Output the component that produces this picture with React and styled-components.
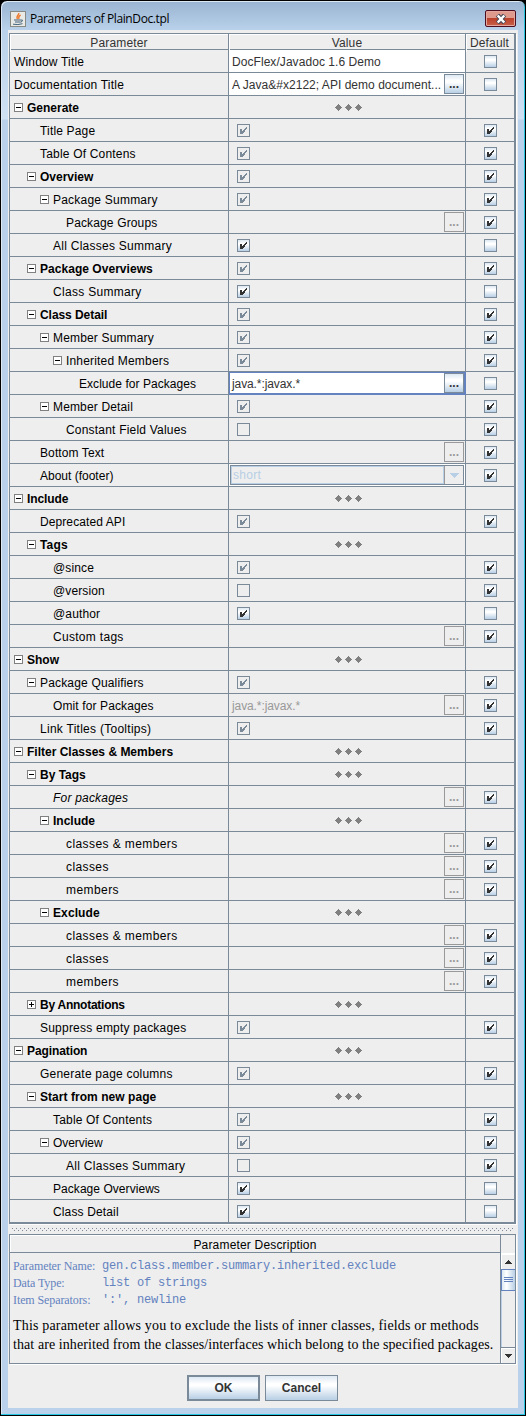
import React from 'react';
import styled, { createGlobalStyle, css } from 'styled-components';

const line = '#7a8a99';
const gloss = 'linear-gradient(#dde8f3 0%, #ffffff 32%, #ffffff 40%, #b8cfe5 100%)';

const Global = createGlobalStyle`
  * { box-sizing: border-box; }
  body { margin: 0; background: #000; font-family: "Liberation Sans", Arial, sans-serif; font-size: 12px; color: #000; }
`;

const Frame = styled.div`
  width: 526px;
  height: 1416px;
  padding: 0 7px 7px 7px;
  border: 1px solid #000;
  border-radius: 7px 7px 0 0;
  background: linear-gradient(#99b4d1 0px, #b9d1ea 29px, #cfe0f2 118px, #b9d1ea 119px, #b9d1ea 100%);
  box-shadow: inset -1px -1px 0 #27c6e0, inset 1px 1px 0 #dfe9f3;
  display: flex;
  flex-direction: column;
`;
const TitleBar = styled.div`
  flex: none;
  height: 29px;
  display: flex;
  align-items: flex-start;
  padding: 9px 2px 0 2px;
`;
const AppIcon = styled.svg`
  width: 16px;
  height: 16px;
  margin-top: 1px;
`;
const Title = styled.div`
  flex: 1;
  padding-left: 4px;
  font: 12px/17px "Open Sans", "Noto Sans", sans-serif;
  letter-spacing: -0.39px;
`;
const Close = styled.div`
  width: 31px;
  height: 17px;
  border: 1px solid #4c0d1e;
  border-radius: 2px;
  box-shadow: inset 0 0 0 1px #e3a79f;
  background: linear-gradient(#dd9a8d 0 45%, #bb412b 50%, #c9604b 100%);
  display: flex;
  align-items: center;
  justify-content: center;
`;
const Body = styled.div`
  flex: 1;
  background: #eee;
  padding: 3px 2px 0 1px;
  display: flex;
  flex-direction: column;
`;
const Table = styled.div`
  width: 507px;
  border: 1px solid ${line};
  border-right-width: 2px;
  border-bottom-width: 2px;
  box-shadow: 1px 1px 0 #fff;
`;
const Grid = styled.div`
  display: grid;
  grid-template-columns: 219px 237px 48px;
  border-bottom: 1px solid ${line};
`;
const HeadRow = styled(Grid)`
  height: 16px;
`;
const HeadCell = styled.div`
  border-right: 1px solid ${p => (p.$last ? 'transparent' : line)};
  box-shadow: inset 1px 1px 0 #fff;
  text-align: center;
  line-height: 18px;
  letter-spacing: 0.15px;
  color: #333;
`;
const Row = styled(Grid)`
  height: 23px;
  &:last-child { height: 22px; border-bottom: 0; }
`;
const NameCell = styled.div`
  border-right: 1px solid ${line};
  display: flex;
  align-items: flex-start;
  padding: 5px 0 0 ${p => p.$indent}px;
  line-height: 14px;
  font-weight: ${p => (p.$bold ? 700 : 400)};
  font-style: ${p => (p.$italic ? 'italic' : 'normal')};
  white-space: nowrap;
`;
const Label = styled.span`
  letter-spacing: ${p => p.$ls}px;
`;
const Toggle = styled.svg`
  width: 9px;
  height: 9px;
  margin: 2px 4px 0 0;
  flex: none;
`;
const ValueCell = styled.div`
  border-right: 1px solid ${line};
  display: flex;
  align-items: flex-start;
  min-width: 0;
  padding: ${p => (p.$check ? '5px 1px 0 8px' : '1px 1px 0 3px')};
  color: ${p => (p.$off ? '#999' : '#333')};
  ${p => p.$white && css`background: #fff;`}
  ${p => p.$active && css`box-shadow: inset 0 0 0 1px #6382bf, 0 1px 0 #6382bf; border-color: #6382bf;`}
`;
const DotsCell = styled(ValueCell)`
  justify-content: center;
  padding: 8px 0 0 3px;
`;
const Text = styled.span`
  flex: 1;
  padding-top: 4px;
  line-height: 14px;
  letter-spacing: ${p => p.$ls}px;
  white-space: nowrap;
`;
const DefaultCell = styled.div`
  display: flex;
  align-items: flex-start;
  justify-content: center;
  padding: 5px 0 0 1px;
`;
const Box = styled.div`
  width: 13px;
  height: 13px;
  border: 1px solid ${line};
  background: ${p => (p.$off ? 'transparent' : gloss)};
  flex: none;
  display: flex;
`;
const More = styled.div`
  width: 20px;
  height: 20px;
  flex: none;
  border: 1px solid ${p => (p.$off ? '#999' : line)};
  background: ${p => (p.$off ? '#eee' : gloss)};
  color: ${p => (p.$off ? '#999' : '#333')};
  font-weight: 700;
  line-height: 19px;
  text-align: center;
`;
const Combo = styled.div`
  width: 234px;
  height: 20px;
  margin-left: -2px;
  border: 1px solid ${line};
  display: flex;
  outline: 1px solid #fff;
`;
const ComboText = styled.div`
  flex: 1;
  border: 1px solid #b8cfe5;
  color: #b8cfe5;
  padding-left: 1px;
  line-height: 16px;
  letter-spacing: 0.3px;
`;
const ComboArrow = styled.div`
  width: 19px;
  border-left: 1px solid #999;
  display: flex;
  align-items: center;
  justify-content: center;
`;
const Splitter = styled.svg`
  display: block;
  width: 507px;
  height: 10px;
  flex: none;
`;
const Description = styled.div`
  width: 507px;
  height: 130px;
  border: 1px solid ${line};
  box-shadow: 1px 1px 0 #fff;
  display: flex;
`;
const DescMain = styled.div`
  flex: 1;
  min-width: 0;
  border-right: 1px solid ${line};
`;
const DescHead = styled.div`
  height: 18px;
  border-bottom: 1px solid ${line};
  box-shadow: inset 1px 1px 0 #fff;
  line-height: 20px;
  text-align: center;
  letter-spacing: 0.18px;
`;
const Meta = styled.div`
  display: grid;
  grid-template-columns: 89px 1fr;
  grid-auto-rows: 17px;
  align-items: center;
  padding: 5px 0 0 3px;
  color: #6382bf;
  font: 12px "Liberation Serif", serif;
  letter-spacing: -0.1px;
`;
const Code = styled.span`
  font: 12px "Liberation Mono", monospace;
  letter-spacing: -0.2px;
  padding-bottom: 2px;
`;
const Para = styled.div`
  padding: 7px 0 0 3px;
  font: 14px/19px "Liberation Serif", serif;
  white-space: nowrap;
`;
const ParaLine = styled.div`
  letter-spacing: ${p => p.$ls}px;
`;
const Scroll = styled.div`
  width: 14px;
  padding-top: 18px;
  display: flex;
  flex-direction: column;
`;
const ScrollButton = styled.div`
  height: 16px;
  display: flex;
  align-items: center;
  justify-content: center;
  border-top: 1px solid ${p => (p.$end ? line : '#fff')};
  box-shadow: inset 1px 1px 0 #fff;
`;
const Thumb = styled.div`
  height: 22px;
  border: 1px solid #6382bf;
  border-right: 0;
  background: linear-gradient(90deg, #dde8f3, #fff 35%, #b8cfe5);
  display: flex;
  align-items: center;
  justify-content: center;
`;
const Track = styled.div`
  flex: 1;
  border-left: 1px solid #b8cfe5;
`;
const Buttons = styled.div`
  display: flex;
  gap: 5px;
  padding: 11px 0 0 178px;
`;
const Button = styled.div`
  width: 73px;
  height: 26px;
  border: ${p => (p.$primary ? 2 : 1)}px solid ${line};
  background: ${gloss};
  color: #333;
  font-weight: 700;
  display: flex;
  align-items: center;
  justify-content: center;
`;

const Tick = ({ off }) => (
  <svg width="11" height="11" viewBox="0 0 11 11" shapeRendering="crispEdges" fill={off ? line : '#333'}>
    <rect x="2" y="4" width="2" height="5" />
    {[3, 3, 3, 2, 2].map((h, i) => <rect key={i} x={4 + i} y={6 - i} width="1" height={h} />)}
  </svg>
);
const Check = ({ on, off }) => <Box $off={off}>{on && <Tick off={off} />}</Box>;
const Dots = () => (
  <svg width="27" height="7" shapeRendering="crispEdges" fill="#808080">
    {[0, 10, 20].map(x => (
      <path key={x} d={`M${x + 3} 0h1v1h1v1h1v1h1v1h-1v1h-1v1h-1v1h-1v-1h-1v-1h-1v-1h-1v-1h1v-1h1v-1h1z`} />
    ))}
  </svg>
);
const Expander = ({ closed }) => (
  <Toggle viewBox="0 0 9 9" shapeRendering="crispEdges">
    <rect x="0.5" y="0.5" width="8" height="8" fill="#fff" stroke="#808080" />
    <path d="M2 4h5v1h-5z" />
    {closed && <path d="M4 2h1v5h-1z" />}
  </Toggle>
);
const Triangle = ({ up, color = '#333', w = 8 }) => (
  <svg width={w} height={w / 2} viewBox="0 0 8 4" shapeRendering="crispEdges">
    <path d={up ? 'M0 4L4 0L8 4z' : 'M0 0L4 4L8 0z'} fill={color} />
  </svg>
);

/* level, label, letter spacing, value, default state, expander, style */
const rows = [
  [0, 'Window Title', 0.17, 'text:DocFlex/Javadoc 1.6 Demo', 0],
  [0, 'Documentation Title', 0.21, 'more:A Java&#x2122; API demo document...', 0],
  [1, 'Generate', 0, 'dots', null, '-', 'b'],
  [2, 'Title Page', 0.17, 'on-', 1],
  [2, 'Table Of Contens', 0.19, 'on-', 1],
  [2, 'Overview', 0, 'on-', 1, '-', 'b'],
  [3, 'Package Summary', 0.22, 'on-', 1, '-'],
  [4, 'Package Groups', 0.14, 'off:', 1],
  [3, 'All Classes Summary', 0.26, 'on', 0],
  [2, 'Package Overviews', 0.04, 'on-', 1, '-', 'b'],
  [3, 'Class Summary', 0.3, 'on', 0],
  [2, 'Class Detail', -0.06, 'on-', 1, '-', 'b'],
  [3, 'Member Summary', 0.16, 'on-', 1, '-'],
  [4, 'Inherited Members', 0.18, 'on-', 1, '-'],
  [5, 'Exclude for Packages', 0.05, 'active:java.*:javax.*', 0],
  [3, 'Member Detail', 0.15, 'on-', 1, '-'],
  [4, 'Constant Field Values', 0.2, 'no-', 1],
  [2, 'Bottom Text', 0.1, 'off:', 1],
  [2, 'About (footer)', 0, 'combo:short', 1],
  [1, 'Include', -0.1, 'dots', null, '-', 'b'],
  [2, 'Deprecated API', 0.09, 'on-', 1],
  [2, 'Tags', 0.15, 'dots', null, '-', 'b'],
  [3, '@since', 0.15, 'on-', 1],
  [3, '@version', 0.12, 'no-', 1],
  [3, '@author', 0.14, 'on', 0],
  [3, 'Custom tags', 0.3, 'off:', 1],
  [1, 'Show', 0, 'dots', null, '-', 'b'],
  [2, 'Package Qualifiers', 0.17, 'on-', 1, '-'],
  [3, 'Omit for Packages', 0.12, 'off:java.*:javax.*', 1],
  [2, 'Link Titles (Tooltips)', 0.27, 'on-', 1],
  [1, 'Filter Classes & Members', 0, 'dots', null, '-', 'b'],
  [2, 'By Tags', 0, 'dots', null, '-', 'b'],
  [3, 'For packages', 0.2, 'off:', 1, '', 'i'],
  [3, 'Include', 0, 'dots', null, '-', 'b'],
  [4, 'classes & members', 0.41, 'off:', 1],
  [4, 'classes', 0.4, 'off:', 1],
  [4, 'members', 0.43, 'off:', 1],
  [3, 'Exclude', 0.1, 'dots', null, '-', 'b'],
  [4, 'classes & members', 0.41, 'off:', 1],
  [4, 'classes', 0.4, 'off:', 1],
  [4, 'members', 0.43, 'off:', 1],
  [2, 'By Annotations', -0.25, 'dots', null, '+', 'b'],
  [2, 'Suppress empty packages', 0.22, 'on-', 1],
  [1, 'Pagination', -0.1, 'dots', null, '-', 'b'],
  [2, 'Generate page columns', 0.22, 'on-', 1],
  [2, 'Start from new page', 0.05, 'dots', null, '-', 'b'],
  [3, 'Table Of Contents', 0.18, 'on-', 1],
  [3, 'Overview', -0.05, 'on-', 1, '-'],
  [4, 'All Classes Summary', 0.28, 'no-', 1],
  [3, 'Package Overviews', 0.05, 'on', 0],
  [3, 'Class Detail', 0.14, 'on', 0],
];

function Value({ kind }) {
  if (kind === 'dots') return <DotsCell><Dots /></DotsCell>;
  const i = kind.indexOf(':');
  if (i < 0) {
    return <ValueCell $check><Check on={kind.startsWith('on')} off={kind.endsWith('-')} /></ValueCell>;
  }
  const type = kind.slice(0, i);
  const text = kind.slice(i + 1);
  if (type === 'combo') {
    return (
      <ValueCell>
        <Combo>
          <ComboText>{text}</ComboText>
          <ComboArrow><Triangle color="#b8cfe5" w={10} /></ComboArrow>
        </Combo>
      </ValueCell>
    );
  }
  const off = type === 'off';
  return (
    <ValueCell $white={!off} $off={off} $active={type === 'active'}>
      <Text $ls={type === 'text' ? 0.06 : type === 'more' ? 0.03 : -0.1}>{text}</Text>
      {type !== 'text' && <More $off={off}>...</More>}
    </ValueCell>
  );
}

export default function App() {
  return (
    <>
      <Global />
      <Frame>
        <TitleBar>
          <AppIcon viewBox="0 0 16 16">
            <rect x="0.5" y="0.5" width="15" height="15" fill="#e9e9e6" stroke="#8a8a85" />
            <path d="M8.700 2C9.700 4 5.300 5 7.500 8M10.700 4C7.800 5.500 8.700 6.500 9 8" fill="none" stroke="#ee7a2c" strokeWidth="1.400" />
            <path d="M4 9h7M5 11h5.500M3 13.200q5 1 9.500-.5M11 9q2.500-.5 1 1.500l-1.500 .7" fill="none" stroke="#41637d" />
          </AppIcon>
          <Title>Parameters of PlainDoc.tpl</Title>
          <Close>
            <svg width="12" height="10" viewBox="0 0 12 10">
              <path d="M2.500 1L9.500 9M9.500 1L2.500 9" stroke="#4a4a5a" strokeWidth="4.400" />
              <path d="M2.700 1.500L9.300 8.500M9.300 1.500L2.700 8.500" stroke="#fff" strokeWidth="2.500" />
            </svg>
          </Close>
        </TitleBar>
        <Body>
          <Table>
            <HeadRow>
              <HeadCell>Parameter</HeadCell>
              <HeadCell>Value</HeadCell>
              <HeadCell $last>Default</HeadCell>
            </HeadRow>
            {rows.map(([level, label, ls, kind, def, exp, style], i) => (
              <Row key={i}>
                <NameCell $indent={4 + 13 * level - (exp ? 13 : 0)} $bold={style === 'b'} $italic={style === 'i'}>
                  {exp && <Expander closed={exp === '+'} />}
                  <Label $ls={ls}>{label}</Label>
                </NameCell>
                <Value kind={kind} />
                <DefaultCell>{def !== null && <Check on={def === 1} />}</DefaultCell>
              </Row>
            ))}
          </Table>
          <Splitter shapeRendering="crispEdges">
            <defs>
              <pattern id="bumps" width="4" height="4" patternUnits="userSpaceOnUse">
                <rect x="3" y="0" width="1" height="1" fill={line} />
                <rect x="1" y="2" width="1" height="1" fill={line} />
              </pattern>
            </defs>
            <rect x="2" y="4" width="503" height="4" fill="url(#bumps)" />
          </Splitter>
          <Description>
            <DescMain>
              <DescHead>Parameter Description</DescHead>
              <Meta>
                <span>Parameter Name:</span><Code>gen.class.member.summary.inherited.exclude</Code>
                <span>Data Type:</span><Code>list of strings</Code>
                <span>Item Separators:</span><Code>':', newline</Code>
              </Meta>
              <Para>
                <ParaLine $ls={0.18}>This parameter allows you to exclude the lists of inner classes, fields or methods</ParaLine>
                <ParaLine $ls={0.08}>that are inherited from the classes/interfaces which belong to the specified packages.</ParaLine>
              </Para>
            </DescMain>
            <Scroll>
              <ScrollButton><Triangle up /></ScrollButton>
              <Thumb>
                <svg width="10" height="6" shapeRendering="crispEdges"><path d="M0 0h9v1H0zM0 2h9v1H0zM0 4h9v1H0z" fill="#6382bf" /></svg>
              </Thumb>
              <Track />
              <ScrollButton $end><Triangle /></ScrollButton>
            </Scroll>
          </Description>
          <Buttons>
            <Button $primary>OK</Button>
            <Button>Cancel</Button>
          </Buttons>
        </Body>
      </Frame>
    </>
  );
}
